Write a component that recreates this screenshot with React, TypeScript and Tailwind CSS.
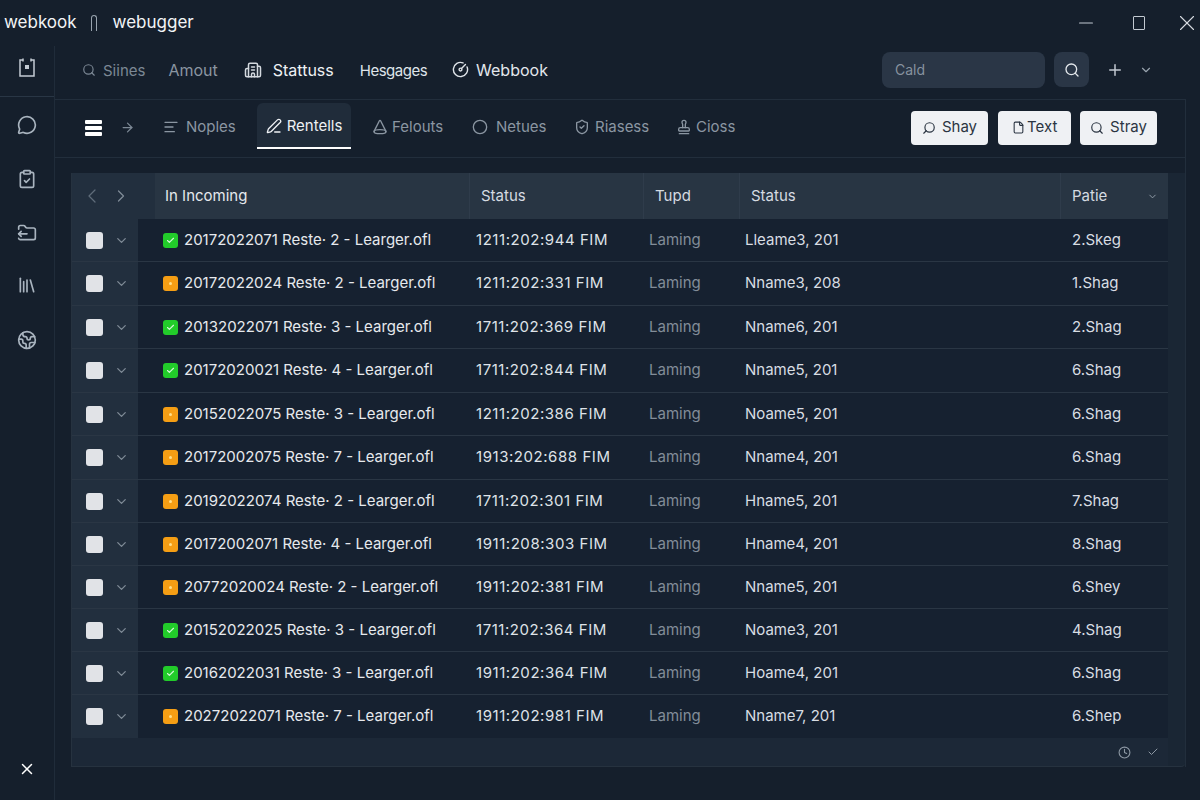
import {
  ArrowRight,
  ChevronDown,
  ChevronLeft,
  ChevronRight,
  Check,
  Circle,
  Clock,
  ClipboardCheck,
  Cone,
  Earth,
  File,
  FolderOutput,
  Building2,
  Library,
  MessageCircle,
  Minus,
  PenLine,
  Plus,
  Search,
  ShieldCheck,
  Stamp,
  Text,
  CircleGauge,
  X,
} from "lucide-react";

type Row = {
  tone: "green" | "orange";
  id: string;
  rest: string;
  time: string;
  name: string;
  size: string;
};

const rows: Row[] = [
  { tone: "green", id: "20172022071", rest: "Reste· 2 - Learger.ofl", time: "1211:202:944 FIM", name: "Lleame3, 201", size: "2.Skeg" },
  { tone: "orange", id: "20172022024", rest: "Reste· 2 - Learger.ofl", time: "1211:202:331 FIM", name: "Nname3, 208", size: "1.Shag" },
  { tone: "green", id: "20132022071", rest: "Reste· 3 - Learger.ofl", time: "1711:202:369 FIM", name: "Nname6, 201", size: "2.Shag" },
  { tone: "green", id: "20172020021", rest: "Reste· 4 - Learger.ofl", time: "1711:202:844 FIM", name: "Nname5, 201", size: "6.Shag" },
  { tone: "orange", id: "20152022075", rest: "Reste· 3 - Learger.ofl", time: "1211:202:386 FIM", name: "Noame5, 201", size: "6.Shag" },
  { tone: "orange", id: "20172002075", rest: "Reste· 7 - Learger.ofl", time: "1913:202:688 FIM", name: "Nname4, 201", size: "6.Shag" },
  { tone: "orange", id: "20192022074", rest: "Reste· 2 - Learger.ofl", time: "1711:202:301 FIM", name: "Hname5, 201", size: "7.Shag" },
  { tone: "orange", id: "20172002071", rest: "Reste· 4 - Learger.ofl", time: "1911:208:303 FIM", name: "Hname4, 201", size: "8.Shag" },
  { tone: "orange", id: "20772020024", rest: "Reste· 2 - Learger.ofl", time: "1911:202:381 FIM", name: "Nname5, 201", size: "6.Shey" },
  { tone: "green", id: "20152022025", rest: "Reste· 3 - Learger.ofl", time: "1711:202:364 FIM", name: "Noame3, 201", size: "4.Shag" },
  { tone: "green", id: "20162022031", rest: "Reste· 3 - Learger.ofl", time: "1911:202:364 FIM", name: "Hoame4, 201", size: "6.Shag" },
  { tone: "orange", id: "20272022071", rest: "Reste· 7 - Learger.ofl", time: "1911:202:981 FIM", name: "Nname7, 201", size: "6.Shep" },
];

const tabs = [
  { label: "Noples", icon: Text, width: "w-[94px] gap-[7px]" },
  { label: "Rentells", icon: PenLine, width: "w-[94px] gap-[5px]", active: true },
  { label: "Felouts", icon: Cone, width: "w-[121px] gap-[4px] pl-[21px]" },
  { label: "Netues", icon: Circle, width: "w-[102px] gap-[8px]" },
  { label: "Riasess", icon: ShieldCheck, width: "w-[102px] gap-[5px]" },
  { label: "Cioss", icon: Stamp, width: "w-[80px] gap-[4px]" },
];

const sideIcons = [
  { icon: MessageCircle, margin: "mt-[18px]" },
  { icon: ClipboardCheck, margin: "mt-[34px]" },
  { icon: FolderOutput, margin: "mt-[34px]" },
  { icon: Library, margin: "mt-[32px]" },
  { icon: Earth, margin: "mt-[35px]" },
];

const gridCols = "grid grid-cols-[66px_331px_174px_96px_321px_108px]";

function Sidebar() {
  return (
    <aside className="flex w-[55px] shrink-0 flex-col items-center border-r border-[#202c3a] pb-[22px]">
      <div className="flex h-[51px] w-full items-center justify-center border-b border-[#293645] pb-[6px]">
        <svg width="20" height="22" viewBox="0 0 20 22" fill="none" stroke="#c3cbd3" strokeWidth="1.5">
          <path d="M6 3H3v16h14V3h-3" />
          <path d="M6 1.5v3M14 1.5v3" />
          <rect x="8" y="8" width="4" height="4" fill="#c3cbd3" stroke="none" />
        </svg>
      </div>
      {sideIcons.map(({ icon: Icon, margin }, i) => (
        <Icon key={i} size={20} className={`${margin} text-[#a9b4bf]`} />
      ))}
      <X size={18} className="mt-auto text-white" />
    </aside>
  );
}

function TopNav() {
  return (
    <nav className="flex h-[53px] shrink-0 items-center pb-[6px] pl-[27px] pr-[47px] text-[16px] leading-[24px]">
      <Search size={14} className="text-[#7c8895]" />
      <span className="ml-[7px] pt-[2px] text-[15px] leading-[24px] text-[#7c8895]">Siines</span>
      <span className="ml-[23px] text-[#8a95a1]">Amout</span>
      <Building2 size={18} className="ml-[26px] text-[#d5dae0]" />
      <span className="ml-[11px] text-[#eef1f4]">Stattuss</span>
      <span className="ml-[26px] pt-[2px] text-[15px] leading-[24px] tracking-[-0.5px] text-[#dfe4e9]">Hesgages</span>
      <CircleGauge size={17} className="ml-[25px] text-[#dfe4e9]" />
      <span className="ml-[7px] text-[#e3e7ec]">Webbook</span>
      <div className="ml-auto flex h-[36px] w-[163px] items-center rounded-lg bg-[#2a3646] pl-[13px] text-[14px] text-[#87929f]">
        Cald
      </div>
      <button className="ml-[9px] flex size-[35px] items-center justify-center rounded-lg bg-[#2a3646] text-[#e4e8ec]">
        <Search size={16} />
      </button>
      <Plus size={18} className="ml-[17px] text-[#c2c9d1]" />
      <ChevronDown size={14} className="ml-[15px] text-[#98a3ae]" />
    </nav>
  );
}

function Toolbar() {
  return (
    <div className="flex h-[58px] shrink-0 items-center border-b border-[#222e3c] pb-[2px] pl-[30px] pr-[28px]">
      <div className="flex w-[20px] flex-col gap-[2px]">
        <span className="h-[4px] w-[17px] rounded-[1px] bg-white" />
        <span className="h-[4px] w-[17px] rounded-[1px] bg-white" />
        <span className="h-[4px] w-[17px] rounded-[1px] bg-white" />
      </div>
      <ArrowRight size={15} className="ml-[15px] text-[#7c8895]" />
      <div className="ml-[28px] mt-[3px] flex h-[46px] items-stretch self-start">
        {tabs.map(({ label, icon: Icon, width, active }) => (
          <div
            key={label}
            className={
              active
                ? `flex ${width} items-center justify-center rounded-t-md border-b-2 border-white bg-[#202c3a] pt-[2px] text-[#eef1f4]`
                : `flex ${width} items-center justify-start pt-[2px] text-[#8b96a2]`
            }
          >
            <Icon size={16} />
            <span className="text-[15px]">{label}</span>
          </div>
        ))}
      </div>
      <div className="ml-auto flex items-center text-[15px] text-[#2b3542]">
        <button className="flex h-[34px] w-[77px] items-center justify-center gap-[6px] rounded-[4px] bg-[#eff1f4]">
          <Search size={14} className="-scale-x-100" />
          Shay
        </button>
        <button className="ml-[10px] flex h-[34px] w-[73px] items-center justify-start gap-[2px] rounded-[4px] bg-[#eff1f4] pl-[14px]">
          <File size={13} />
          Text
        </button>
        <button className="ml-[9px] flex h-[34px] w-[77px] items-center justify-center gap-[6px] rounded-[4px] bg-[#eff1f4]">
          <Search size={14} />
          Stray
        </button>
      </div>
    </div>
  );
}

function HeaderCell({ label, children }: { label: string; children?: React.ReactNode }) {
  return (
    <div className="flex items-center border-l border-[#2f3c4b] pl-[11px] text-[#d5dbe1]">
      {label}
      {children}
    </div>
  );
}

function Table() {
  return (
    <div className="flex w-[1096px] flex-col text-[15px]">
      <div className={`${gridCols} h-[46px] bg-[#283543]`}>
        <div className="flex items-center bg-[#222f3e] pl-[8px]">
          <ChevronLeft size={24} strokeWidth={1.25} className="text-[#5f6c7a]" />
          <ChevronRight size={20} strokeWidth={1.5} className="ml-[7px] text-[#7f8b97]" />
        </div>
        <div className="flex items-center bg-[#222f3e]">
          <div className="ml-[17px] flex h-full flex-1 items-center bg-[#283543] pl-[10px] text-[#e5e9ed]">In Incoming</div>
        </div>
        <HeaderCell label="Status" />
        <HeaderCell label="Tupd" />
        <HeaderCell label="Status" />
        <HeaderCell label="Patie">
          <ChevronDown size={11} className="ml-[40px] text-[#98a3ae]" />
        </HeaderCell>
      </div>
      {rows.map((row, i) => (
        <div
          key={row.id}
          className={`${gridCols} ${i % 2 === 1 && i < 6 ? "h-[44px]" : "h-[43px]"} ${
            i < rows.length - 1 ? "border-b border-[#2a3644]" : ""
          } bg-[#162130]`}
        >
          <div className="flex items-center bg-[#222f3e] pl-[14px]">
            <span className="size-[17px] rounded-[3px] bg-[#e1e3e7]" />
            <ChevronDown size={15} className="ml-[11px] text-[#7f8b97]" />
          </div>
          <div className="flex items-center whitespace-nowrap pl-[25px] text-[#e6e9ed]">
            <span
              className={`mr-[6px] flex size-[15px] shrink-0 items-center justify-center rounded-[3px] ${
                row.tone === "green" ? "bg-[#22cc2a]" : "bg-[#f59e14]"
              }`}
            >
              {row.tone === "green" ? (
                <Check size={9} strokeWidth={3} className="text-[#d7f7d9]" />
              ) : (
                <span className="size-[3px] rounded-full bg-[#ffe08a]" />
              )}
            </span>
            {row.id} {row.rest}
          </div>
          <div className="flex items-center whitespace-nowrap pl-[7px] tracking-[0.55px] text-[#dfe3e8]">{row.time}</div>
          <div className="flex items-center pl-[6px] text-[#828d99]">Laming</div>
          <div className="flex items-center pl-[6px] text-[#d8dde3]">{row.name}</div>
          <div className="flex items-center pl-[12px] text-[#d8dde3]">{row.size}</div>
        </div>
      ))}
    </div>
  );
}

export default function App() {
  return (
    <div className="flex h-[800px] w-[1200px] flex-col overflow-hidden bg-[#151f2c] [font-family:Inter,sans-serif]">
      <header className="flex h-[46px] shrink-0 items-center pl-[4px] text-[17px] text-[#f2f4f6]">
        <span>webkook</span>
        <span className="ml-[14px] h-[16px] w-[6px] rounded-t-sm border-x border-t border-[#98a3ae]" />
        <span className="ml-[16px]">webugger</span>
        <Minus size={22} strokeWidth={1.25} className="ml-auto text-[#c2c9d1]" />
        <span className="ml-[36px] h-[14px] w-[12px] rounded-[1px] border-[1.5px] border-[#c2c9d1]" />
        <X size={26} strokeWidth={1} className="ml-[29px] text-[#d5dae0]" />
      </header>
      <div className="flex min-h-0 flex-1">
        <Sidebar />
        <main className="flex min-w-0 flex-1 flex-col">
          <TopNav />
          <div className="mr-[14px] flex h-[668px] flex-col border-r border-t border-[#222e3c]">
            <Toolbar />
            <div className="ml-[16px] mt-[15px] flex flex-1 flex-col rounded-br-sm border-b border-l border-[#26323f] bg-[#1a2634]">
              <Table />
              <div className="flex w-[1096px] flex-1 items-center justify-end gap-[16px] bg-[#1c2837] pr-[9px] text-[#8d98a4]">
                <Clock size={13} />
                <Check size={12} />
              </div>
            </div>
          </div>
        </main>
      </div>
    </div>
  );
}
